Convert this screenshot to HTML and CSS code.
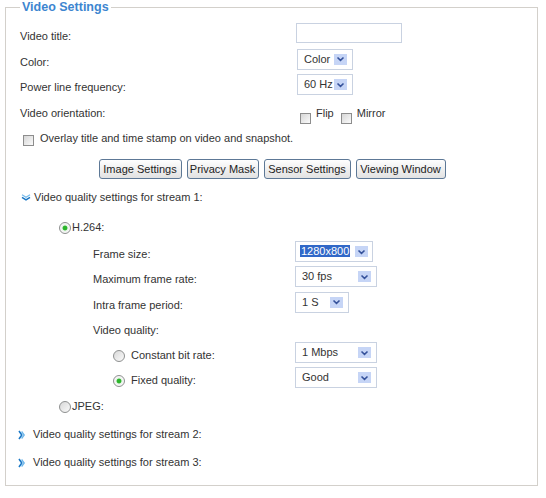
FILE: index.html
```html
<!DOCTYPE html>
<html>
<head>
<meta charset="utf-8">
<link rel="stylesheet" href="styles.css">
</head>
<body>
<fieldset class="settings">
  <legend class="title">Video Settings</legend>

  <div class="row">
    <span class="lbl lbl-main">Video title:</span>
    <span class="textbox"></span>
  </div>
  <div class="row">
    <span class="lbl lbl-main">Color:</span>
    <div class="sel w56"><span class="val">Color</span><span class="dd"><svg width="9" height="6" viewBox="0 0 9 6"><polyline points="1.5,1.5 4.5,4.3 7.5,1.5" fill="none" stroke="#34519a" stroke-width="1.6"/></svg></span></div>
  </div>
  <div class="row">
    <span class="lbl lbl-main">Power line frequency:</span>
    <div class="sel w56"><span class="val">60 Hz</span><span class="dd"><svg width="9" height="6" viewBox="0 0 9 6"><polyline points="1.5,1.5 4.5,4.3 7.5,1.5" fill="none" stroke="#34519a" stroke-width="1.6"/></svg></span></div>
  </div>
  <div class="row">
    <span class="lbl lbl-main">Video orientation:</span>
    <span class="chk chk-orient"></span><span class="lbl opt-text">Flip</span>
    <span class="chk chk-orient chk-second"></span><span class="lbl opt-text">Mirror</span>
  </div>
  <div class="row">
    <span class="chk chk-overlay"></span><span class="lbl overlay-text">Overlay title and time stamp on video and snapshot.</span>
  </div>

  <div class="btns">
    <button class="btn b-image">Image Settings</button>
    <button class="btn b-privacy">Privacy Mask</button>
    <button class="btn b-sensor">Sensor Settings</button>
    <button class="btn b-view">Viewing Window</button>
  </div>

  <div class="row stream stream-open">
    <span class="icon"><svg width="10" height="7" viewBox="0 0 10 7"><polyline points="1,0.8 5,3.2 9,0.8" fill="none" stroke="#79bdec" stroke-width="1.3"/><polyline points="1,3.3 5,5.9 9,3.3" fill="none" stroke="#1b78c6" stroke-width="1.5"/></svg></span>
    <span class="lbl">Video quality settings for stream 1:</span>
  </div>

  <div class="row h264">
    <span class="radio on radio-codec"></span><span class="lbl codec-text">H.264:</span>
  </div>

  <div class="row inner">
    <span class="lbl lbl-inner">Frame size:</span>
    <div class="sel w78 frame"><span class="val"><span class="hl">1280x800</span></span><span class="dd"><svg width="9" height="6" viewBox="0 0 9 6"><polyline points="1.5,1.5 4.5,4.3 7.5,1.5" fill="none" stroke="#34519a" stroke-width="1.6"/></svg></span></div>
  </div>
  <div class="row inner">
    <span class="lbl lbl-inner">Maximum frame rate:</span>
    <div class="sel w82"><span class="val">30 fps</span><span class="dd"><svg width="9" height="6" viewBox="0 0 9 6"><polyline points="1.5,1.5 4.5,4.3 7.5,1.5" fill="none" stroke="#34519a" stroke-width="1.6"/></svg></span></div>
  </div>
  <div class="row inner">
    <span class="lbl lbl-inner">Intra frame period:</span>
    <div class="sel w54"><span class="val">1 S</span><span class="dd"><svg width="9" height="6" viewBox="0 0 9 6"><polyline points="1.5,1.5 4.5,4.3 7.5,1.5" fill="none" stroke="#34519a" stroke-width="1.6"/></svg></span></div>
  </div>
  <div class="row inner">
    <span class="lbl lbl-inner">Video quality:</span>
  </div>
  <div class="row inner">
    <div class="sub">
      <span class="radio radio-sub"></span><span class="lbl sub-text">Constant bit rate:</span>
    </div>
    <div class="sel w82"><span class="val">1 Mbps</span><span class="dd"><svg width="9" height="6" viewBox="0 0 9 6"><polyline points="1.5,1.5 4.5,4.3 7.5,1.5" fill="none" stroke="#34519a" stroke-width="1.6"/></svg></span></div>
  </div>
  <div class="row inner">
    <div class="sub">
      <span class="radio on radio-sub"></span><span class="lbl sub-text">Fixed quality:</span>
    </div>
    <div class="sel w82"><span class="val">Good</span><span class="dd"><svg width="9" height="6" viewBox="0 0 9 6"><polyline points="1.5,1.5 4.5,4.3 7.5,1.5" fill="none" stroke="#34519a" stroke-width="1.6"/></svg></span></div>
  </div>
  <div class="row inner">
    <span class="radio radio-codec"></span><span class="lbl codec-text">JPEG:</span>
  </div>

  <div class="row stream stream2">
    <span class="icon icon-right"><svg width="8" height="10" viewBox="0 0 8 10"><polyline points="1,1 3.8,5 1,9" fill="none" stroke="#1b78c6" stroke-width="1.6"/><polyline points="3.6,1.5 6.2,5 3.6,8.5" fill="none" stroke="#6cb6ea" stroke-width="1.3"/></svg></span>
    <span class="lbl">Video quality settings for stream 2:</span>
  </div>
  <div class="row stream stream3">
    <span class="icon icon-right"><svg width="8" height="10" viewBox="0 0 8 10"><polyline points="1,1 3.8,5 1,9" fill="none" stroke="#1b78c6" stroke-width="1.6"/><polyline points="3.6,1.5 6.2,5 3.6,8.5" fill="none" stroke="#6cb6ea" stroke-width="1.3"/></svg></span>
    <span class="lbl">Video quality settings for stream 3:</span>
  </div>
</fieldset>
</body>
</html>
```

FILE: styles.css
```css
body {
  margin: 0;
  background: #fff;
  font: 11px "Liberation Sans", Arial, sans-serif;
  color: #333;
}

.settings {
  margin: 0 0 0 5px;
  width: 533px;
  box-sizing: border-box;
  border: 1px solid #d3d0cb;
  padding: 8px 13px 11px 14px;
  min-width: 0;
}

.title {
  padding: 0 2px;
  font-weight: bold;
  font-size: 12.5px;
  line-height: 15px;
  color: #3d86d0;
}

.row {
  display: flex;
  align-items: flex-start;
  height: 25.5px;
}

.lbl {
  line-height: 20px;
  padding-top: 3px;
  white-space: nowrap;
}

.lbl-main {
  width: 277px;
  flex: none;
}

.textbox {
  width: 106px;
  height: 20px;
  box-sizing: border-box;
  border: 1px solid #c9d2e1;
  margin-left: -1px;
}

.sel {
  display: flex;
  align-items: center;
  justify-content: space-between;
  height: 21px;
  box-sizing: border-box;
  border: 1px solid #c9d2e1;
  padding: 0 5px 0 6px;
  flex: none;
  background: #fff;
}
.sel .val {
  line-height: 13px;
  color: #333;
}
.sel .hl {
  background: #3168c8;
  color: #fff;
  padding: 0 1px;
}
.sel.frame {
  padding-left: 4px;
  padding-right: 4px;
}
.dd {
  width: 13px;
  height: 11px;
  background: #c6d5f6;
  display: flex;
  align-items: center;
  justify-content: center;
  flex: none;
}
.w54 { width: 54px; }
.w56 { width: 56px; }
.w78 { width: 78px; }
.w82 { width: 82px; }

.chk {
  width: 11px;
  height: 11px;
  box-sizing: border-box;
  border: 1px solid #8d8d8d;
  background: linear-gradient(135deg, #d6d6d6, #fbfbfb);
  flex: none;
}
.chk-orient {
  margin-top: 13px;
  margin-left: 3px;
}
.chk-second {
  margin-left: 7px;
}
.opt-text {
  margin-left: 5px;
}
.chk-overlay {
  margin-top: 10px;
  margin-left: 3px;
}
.overlay-text {
  margin-left: 6px;
}

.btns {
  display: flex;
  justify-content: center;
  gap: 5px;
  margin-top: 8.5px;
  height: 20px;
}
.btn {
  height: 20px;
  box-sizing: border-box;
  border: 1px solid #5d7896;
  border-radius: 3px;
  background: linear-gradient(#fefefe, #e2e2e2);
  font: inherit;
  color: #222;
  padding: 0;
  text-align: center;
  line-height: 18px;
  white-space: nowrap;
}
.b-image { width: 83px; }
.b-privacy { width: 72px; }
.b-sensor { width: 87px; }
.b-view { width: 90px; }

.stream .icon {
  width: 13px;
  flex: none;
  display: flex;
  padding-top: 10px;
}
.stream-open {
  height: 30px;
  margin-top: 5px;
}
.stream-open .icon {
  padding-left: 1px;
  width: 13px;
}
.icon-right {
  margin-left: -2px;
  width: 15px !important;
  padding-top: 9px !important;
}
.stream2 {
  margin-top: 3px;
  height: 28px;
}
.stream3 {
  height: 25px;
}

.radio {
  width: 12px;
  height: 12px;
  box-sizing: border-box;
  border-radius: 50%;
  border: 1px solid #8e9090;
  background: linear-gradient(135deg, #d8d8d8, #fafafa);
  flex: none;
  margin-top: 8px;
}
.radio.on {
  background: radial-gradient(circle at center, #2cb52c 0, #2cb52c 2px, #dff2df 2.8px, #f6f6f6 4px);
}
.h264 {
  height: 27px;
}
.radio-codec {
  margin-left: 39px;
}
.codec-text {
  margin-left: 1px;
}

.inner {
  height: 25.3px;
}
.lbl-inner {
  width: 275px;
  box-sizing: border-box;
  padding-left: 73px;
  flex: none;
}
.sub {
  width: 275px;
  display: flex;
  align-items: flex-start;
  padding-left: 93px;
  box-sizing: border-box;
  flex: none;
}
.sub-text {
  margin-left: 6px;
}
```
